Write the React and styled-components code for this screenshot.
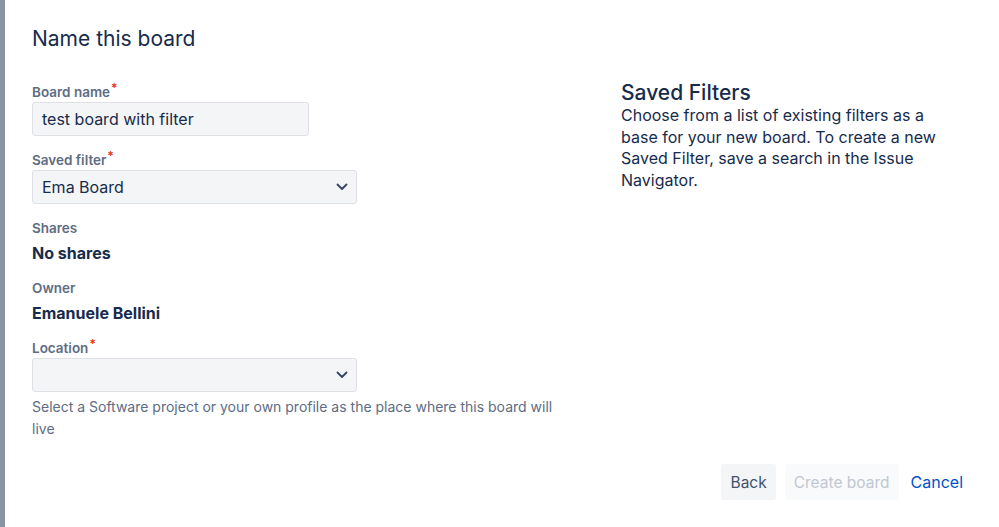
import { createGlobalStyle, styled } from "styled-components";

const GlobalStyle = createGlobalStyle`
  html, body {
    margin: 0;
    padding: 0;
    background: #ffffff;
    font-family: Inter, "Noto Sans", "Liberation Sans", sans-serif;
    color: #172b4d;
  }
`;

const Chevron = () => (
  <svg width="12" height="8" viewBox="0 0 12 8">
    <polyline
      points="1.5,1.5 6,6 10.5,1.5"
      fill="none"
      stroke="#344563"
      strokeWidth="1.8"
      strokeLinecap="round"
      strokeLinejoin="round"
    />
  </svg>
);

const App = () => {
  return (
    <>
      <GlobalStyle />
      <Page>
        <Stripe />
        <Dialog>
          <Title>Name this board</Title>
          <Columns>
            <FormCol>
              <Field>
                <Label>
                  Board name<Req>*</Req>
                </Label>
                <TextBox width={277}>test board with filter</TextBox>
              </Field>
              <Field>
                <Label>
                  Saved filter<Req>*</Req>
                </Label>
                <Select>
                  <span>Ema Board</span>
                  <Chevron />
                </Select>
              </Field>
              <Info>
                <InfoLabel>Shares</InfoLabel>
                <InfoValue>No shares</InfoValue>
              </Info>
              <Info>
                <InfoLabel>Owner</InfoLabel>
                <InfoValue>Emanuele Bellini</InfoValue>
              </Info>
              <Field last>
                <Label>
                  Location<Req>*</Req>
                </Label>
                <Select>
                  <span></span>
                  <Chevron />
                </Select>
                <Help>
                  Select a Software project or your own profile as the place
                  where this board will live
                </Help>
              </Field>
            </FormCol>
            <SideCol>
              <SideTitle>Saved Filters</SideTitle>
              <SideText>
                Choose from a list of existing filters as a base for your new
                board. To create a new Saved Filter, save a search in the Issue
                Navigator.
              </SideText>
            </SideCol>
          </Columns>
          <Footer>
            <Button>Back</Button>
            <Button disabled>Create board</Button>
            <LinkButton>Cancel</LinkButton>
          </Footer>
        </Dialog>
      </Page>
    </>
  );
};

export default App;

const Page = styled.div`
  display: flex;
  width: 999px;
  height: 527px;
  overflow: hidden;
`;

const Stripe = styled.div`
  width: 5px;
  flex-shrink: 0;
  background: #8993a4;
`;

const Dialog = styled.div`
  flex: 1;
  display: flex;
  flex-direction: column;
  padding: 25px 32px 0 27px;
`;

const Title = styled.h1`
  margin: 0;
  font-size: 21px;
  font-weight: 400;
  line-height: 28px;
  color: #172b4d;
`;

const Columns = styled.div`
  display: flex;
  margin-top: 31px;
`;

const FormCol = styled.div`
  width: 528px;
  display: flex;
  flex-direction: column;
`;

const Field = styled.div`
  display: flex;
  flex-direction: column;
  margin-bottom: ${(p) => (p.last ? "0" : "16px")};
`;

const Label = styled.label`
  display: block;
  height: 16px;
  font-size: 13.5px;
  font-weight: 600;
  color: #5e6c84;
  line-height: 16px;
  margin-bottom: 2px;
`;

const Req = styled.span`
  position: relative;
  top: -5px;
  line-height: 0;
  color: #de350b;
  font-size: 12px;
  margin-left: 1px;
`;

const TextBox = styled.div`
  box-sizing: border-box;
  width: ${(p) => p.width}px;
  height: 34px;
  display: flex;
  align-items: center;
  padding: 0 9px;
  background: #f4f5f7;
  border: 1px solid #dfe1e6;
  border-radius: 3px;
  font-size: 16px;
  color: #172b4d;
`;

const Select = styled.div`
  box-sizing: border-box;
  width: 325px;
  height: 34px;
  display: flex;
  align-items: center;
  justify-content: space-between;
  padding: 0 8px 0 9px;
  background: #f4f5f7;
  border: 1px solid #dfe1e6;
  border-radius: 3px;
  font-size: 16px;
  color: #172b4d;
`;

const Info = styled.div`
  display: flex;
  flex-direction: column;
  margin-bottom: 17px;
`;

const InfoLabel = styled.div`
  font-size: 13.5px;
  font-weight: 600;
  color: #5e6c84;
  line-height: 16px;
  margin-bottom: 7px;
`;

const InfoValue = styled.div`
  font-size: 16px;
  font-weight: 700;
  color: #172b4d;
  line-height: 20px;
`;

const Help = styled.div`
  margin-top: 4px;
  font-size: 14px;
  line-height: 22px;
  color: #5e6c84;
`;

const SideCol = styled.div`
  margin-left: 61px;
  width: 340px;
`;

const SideTitle = styled.h2`
  margin: -2px 0 2px;
  font-size: 21px;
  font-weight: 500;
  line-height: 21px;
  color: #172b4d;
`;

const SideText = styled.p`
  margin: 0;
  font-size: 16px;
  line-height: 21.7px;
  color: #172b4d;
`;

const Footer = styled.div`
  display: flex;
  justify-content: flex-end;
  align-items: center;
  gap: 9px;
  margin-top: 24px;
  padding-right: 4px;
`;

const Button = styled.button`
  height: 36px;
  padding: 0 9px;
  border: none;
  border-radius: 3px;
  font-family: inherit;
  font-size: 15.5px;
  background: ${(p) => (p.disabled ? "#f9fafb" : "#f4f5f7")};
  color: ${(p) => (p.disabled ? "#c1c7d0" : "#42526e")};
`;

const LinkButton = styled.button`
  height: 36px;
  padding: 0 0 0 3px;
  border: none;
  background: transparent;
  font-family: inherit;
  font-size: 16px;
  color: #0052cc;
`;
